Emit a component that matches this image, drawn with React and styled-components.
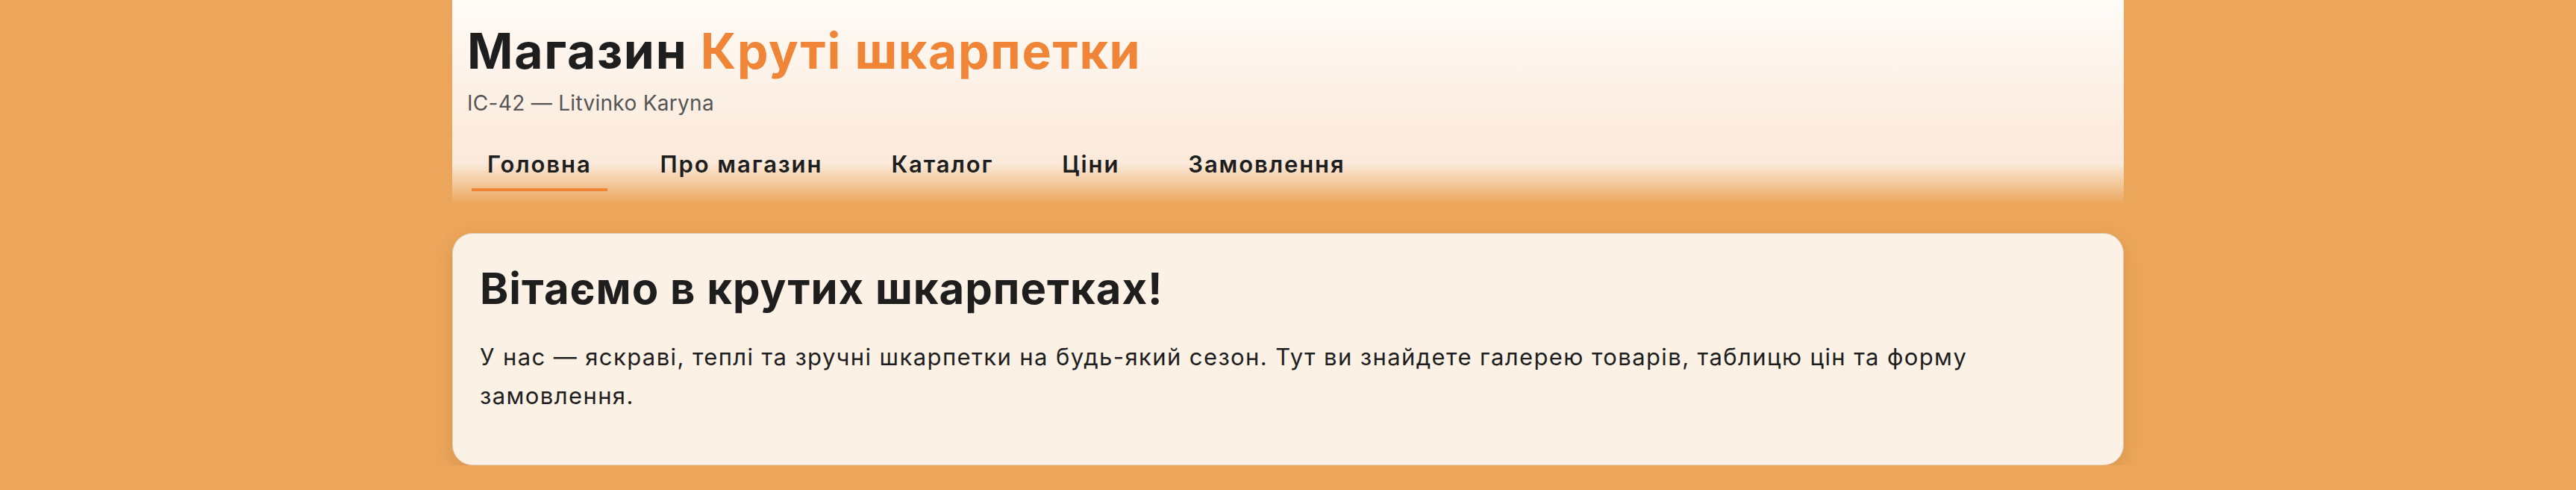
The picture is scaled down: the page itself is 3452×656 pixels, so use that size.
import React from 'react';
import styled, {createGlobalStyle} from 'styled-components';

const GlobalStyle = createGlobalStyle`
  html, body {
    margin: 0;
    padding: 0;
    background: #eba65b;
  }
  body {
    font-family: Inter, "Noto Sans", "DejaVu Sans", sans-serif;
    color: #1e1e1e;
  }
  * {
    box-sizing: border-box;
  }
`;

const Page = styled.div`
  max-width: 2240px;
  margin: 0 auto;
`;

const Header = styled.header`
  height: 273px;
  padding: 28px 20px 0;
  background: linear-gradient(180deg, #fffbf7 0%, #fcede0 60%, #fbeadb 80%, #eba65b 100%);
`;

const Title = styled.h1`
  margin: 0;
  font-size: 66px;
  line-height: 80px;
  font-weight: 700;
  letter-spacing: 1.7px;
  color: #1e1e1e;

  span {
    color: #f08537;
  }
`;

const Subtitle = styled.p`
  margin: 10px 0 0;
  font-size: 28px;
  line-height: 40px;
  font-weight: 400;
  letter-spacing: 0.3px;
  color: #555;
`;

const Nav = styled.nav`
  display: flex;
  gap: 50px;
  margin-top: 30px;
  padding-left: 6px;
`;

const NavLink = styled.a`
  display: block;
  padding: 12px 21px;
  font-size: 31px;
  line-height: 40px;
  font-weight: 600;
  letter-spacing: 1.9px;
  color: #1e1e1e;
  text-decoration: none;
  border-bottom: 4px solid ${props => (props.active ? '#f08537' : 'transparent')};
  cursor: pointer;
`;

const Card = styled.section`
  margin-top: 39px;
  padding: 38px 40px 40px 36px;
  background: #fcf1e5;
  border: 1px solid #ddd0c0;
  border-radius: 27px;
  box-shadow: 0 8px 22px rgba(120, 60, 0, 0.16);
`;

const Heading = styled.h2`
  margin: 0;
  font-size: 58px;
  line-height: 70px;
  font-weight: 700;
  letter-spacing: 1px;
`;

const Text = styled.p`
  margin: 31px 0 26px;
  font-size: 31px;
  line-height: 52px;
  font-weight: 400;
  letter-spacing: 1.4px;
`;

const links = ['Головна', 'Про магазин', 'Каталог', 'Ціни', 'Замовлення'];

export default function App() {
  return (
    <Page>
      <GlobalStyle />
      <Header>
        <Title>
          Магазин <span>Круті шкарпетки</span>
        </Title>
        <Subtitle>IC-42 — Litvinko Karyna</Subtitle>
        <Nav>
          {links.map((l, i) => (
            <NavLink key={l} active={i === 0}>
              {l}
            </NavLink>
          ))}
        </Nav>
      </Header>
      <Card>
        <Heading>Вітаємо в крутих шкарпетках!</Heading>
        <Text>
          У нас — яскраві, теплі та зручні шкарпетки на будь-який сезон. Тут ви знайдете галерею
          товарів, таблицю цін та форму замовлення.
        </Text>
      </Card>
    </Page>
  );
}
